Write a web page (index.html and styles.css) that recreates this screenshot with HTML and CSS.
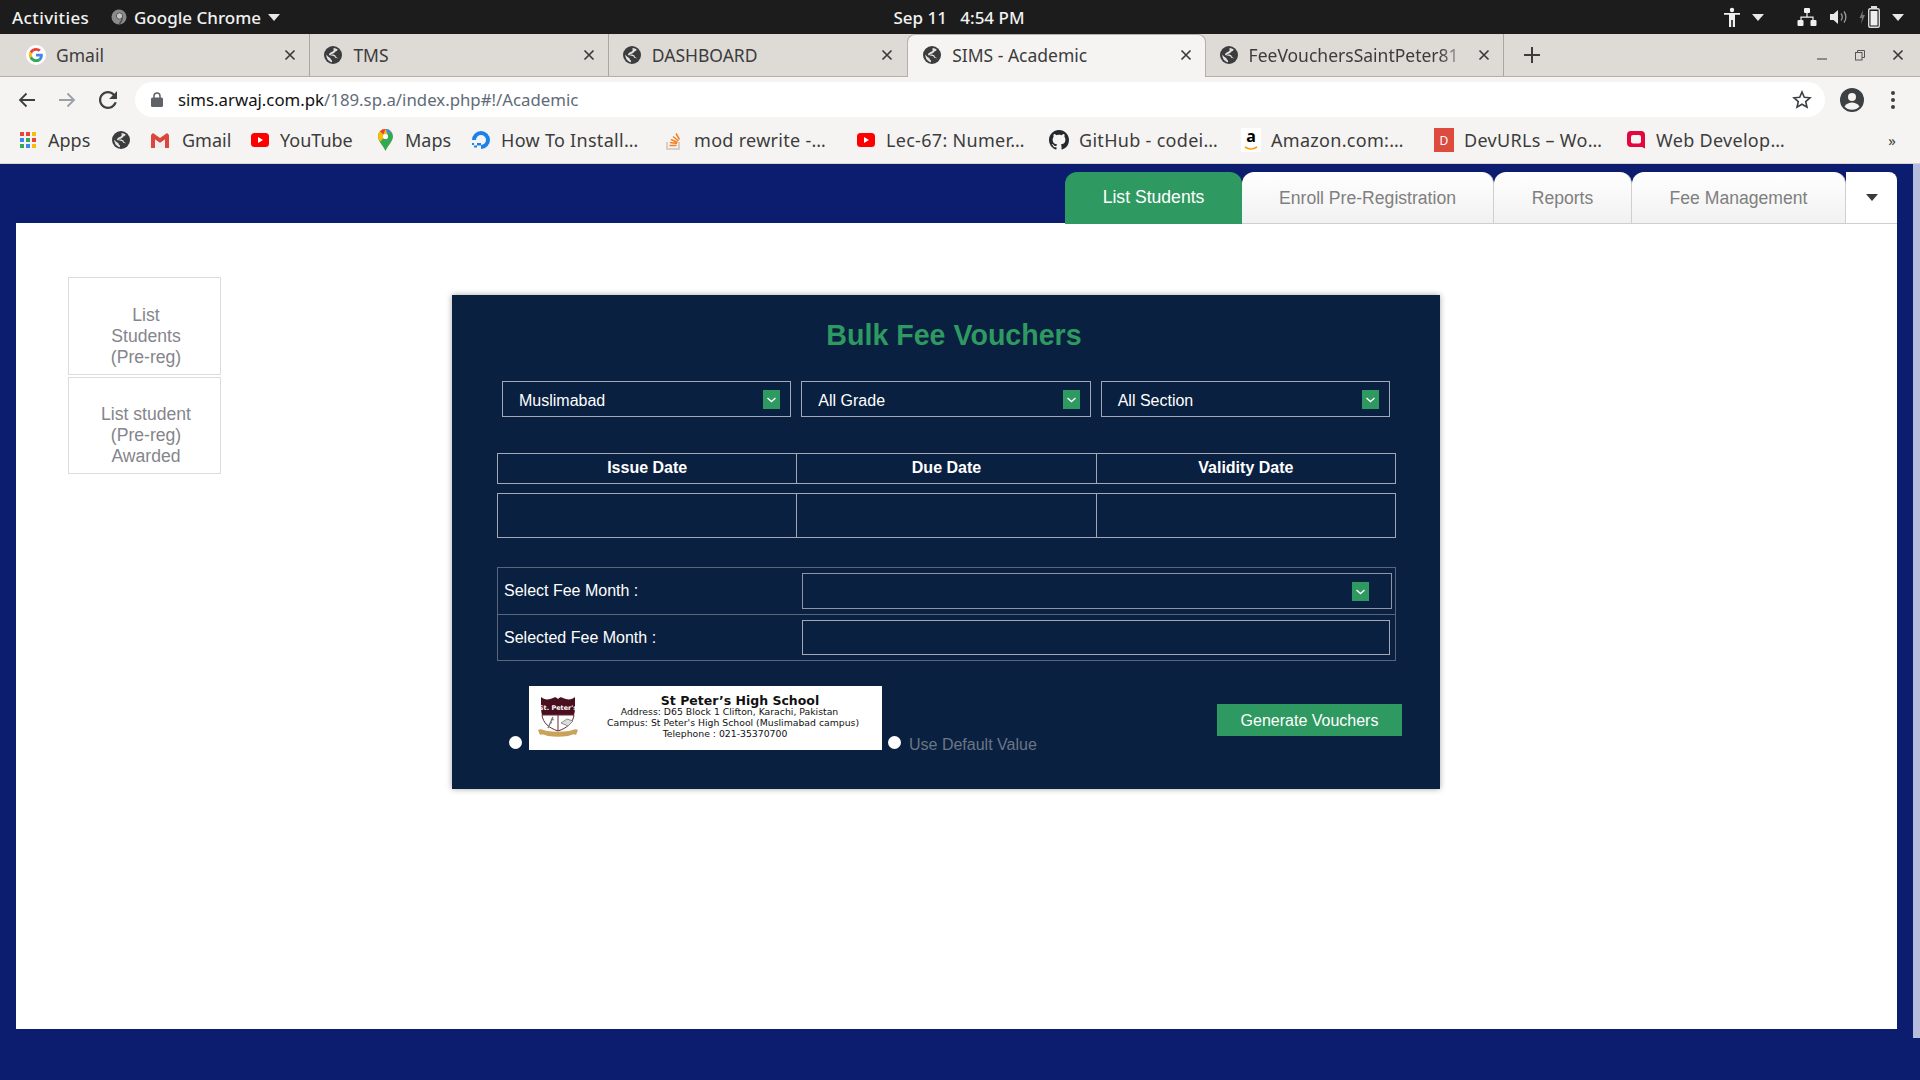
FILE: index.html
```html
<!DOCTYPE html>
<html lang="en">
<head>
  <meta charset="UTF-8" />
  <title>SIMS - Academic</title>
  <link rel="stylesheet" href="styles.css">
</head>
<body>

  <svg class="defs" width="0" height="0">
    <symbol id="globe" viewBox="0 0 20 20">
      <circle cx="10" cy="10" r="10" fill="#3a3c3e"/>
      <path d="M10.500 2.200c2 .1 3.400.7 4.700 1.700-.3 1.300-1.300 2-2.600 2.300-.5 1.200-1.600 1.700-2.800 2.400-1.100-.1-2.200.2-2.800 1 1.300 0 3-.2 4.500.3 1.200.4 1.800 1.200 1.700 2.300 1.100.2 1.800.8 2.100 1.900-.5-.8-1.500-1.200-2.900-1.100-.3-1.300-1.300-2-3-2.200-1.500-.2-3-.1-3.900-1 .3-2.300 2.400-3 4.300-3.700.9-.6 1.100-1.400.7-3.900z" fill="#e6e4e1"/>
      <path d="M2.600 9.500c1.300 2 2.800 3.300 4.600 4 .1 1.300.6 2 1.600 2.300l.1 2.300C5.300 17.400 2.300 14 2.600 9.500z" fill="#e6e4e1"/>
    </symbol>
    <symbol id="close" viewBox="0 0 12 12">
      <path d="M1.5 1.5l9 9M10.5 1.5l-9 9" stroke="#3c3c3c" stroke-width="1.7" fill="none"/>
    </symbol>
    <symbol id="youtube" viewBox="0 0 18 14">
      <rect width="18" height="14" rx="3.5" fill="#f00"/>
      <path d="M7 4l5 3-5 3z" fill="#fff"/>
    </symbol>
    <symbol id="chev" viewBox="0 0 17 19">
      <rect width="17" height="19" fill="#2e9960"/>
      <path d="M4.5 8l4 3.6 4-3.6" stroke="#fff" stroke-width="1.3" fill="none"/>
    </symbol>
  </svg>

  <!-- GNOME top bar -->
  <div class="topbar">
    <div class="topbar-left">
      <span class="activities">Activities</span>
      <svg class="chrome-dot" width="16" height="16" viewBox="0 0 16 16">
        <circle cx="8" cy="8" r="7.500" fill="#8a8a8a"/>
        <circle cx="8.500" cy="7" r="3.200" fill="#c4c4c4" stroke="#5a5a5a" stroke-width="1"/>
        <path d="M11.500 8.500C11.300 11 10 13 8.500 15" stroke="#4a4a4a" stroke-width="1.300" fill="none"/>
      </svg>
      <span class="appname">Google Chrome</span>
      <span class="tri"></span>
    </div>
    <div class="clock">Sep 11 &nbsp; 4:54 PM</div>
    <div class="topbar-right">
      <svg width="16" height="20" viewBox="0 0 16 20" fill="#f0f0f0">
        <circle cx="8" cy="3" r="2.2"/>
        <path d="M0 6h16v1.8h-5V20H8.8v-7H7.2v7H5V7.8H0z"/>
      </svg>
      <span class="tri tri-a"></span>
      <svg class="net" width="20" height="20" viewBox="0 0 20 20" fill="#f0f0f0">
        <rect x="7" y="1" width="6" height="5" rx="1"/>
        <rect x="0.500" y="13" width="6" height="6" rx="1"/>
        <rect x="13.500" y="13" width="6" height="6" rx="1"/>
        <path d="M9.400 6h1.200v3.500h6v3.500h-1.200v-2.300H4.600V13H3.400V9.500h6z"/>
      </svg>
      <svg class="vol" width="19" height="20" viewBox="0 0 19 20">
        <path d="M1 7h3.500L9 3v14l-4.500-4H1z" fill="#e8e8e8"/>
        <path d="M12 6.500c1.500 2 1.500 5 0 7M15 4.500c2.500 3.200 2.500 7.800 0 11" stroke="#9a9a9a" stroke-width="1.300" fill="none"/>
      </svg>
      <svg class="batt" width="22" height="24" viewBox="0 0 22 24">
        <path d="M4 5L0.500 13H3l-1 6 4-9H3.500z" fill="#777"/>
        <rect x="9.700" y="3.700" width="10.600" height="18.600" rx="1.500" fill="none" stroke="#ddd" stroke-width="1.400"/>
        <rect x="12" y="1" width="6" height="2" fill="#ddd"/>
        <rect x="11.500" y="6" width="7" height="14.500" fill="#eee"/>
      </svg>
      <span class="tri tri-b"></span>
    </div>
  </div>

  <!-- browser tabs -->
  <div class="tabstrip">
    <div class="tab">
      <svg class="fav" width="20" height="20" viewBox="0 0 48 48">
        <circle cx="24" cy="24" r="24" fill="#fff"/>
        <g transform="translate(7 7) scale(.71)">
          <path fill="#EA4335" d="M24 9.500c3.540 0 6.710 1.220 9.210 3.600l6.850-6.850C35.900 2.380 30.470 0 24 0 14.620 0 6.510 5.380 2.560 13.220l7.980 6.190C12.430 13.720 17.740 9.500 24 9.500z"/>
          <path fill="#4285F4" d="M46.980 24.550c0-1.570-.15-3.090-.38-4.550H24v9.020h12.940c-.58 2.960-2.260 5.480-4.780 7.180l7.730 6c4.510-4.180 7.090-10.360 7.090-17.650z"/>
          <path fill="#FBBC05" d="M10.530 28.590c-.48-1.450-.76-2.990-.76-4.590s.27-3.140.76-4.590l-7.980-6.190C.92 16.460 0 20.120 0 24c0 3.880.92 7.540 2.560 10.780l7.970-6.190z"/>
          <path fill="#34A853" d="M24 48c6.480 0 11.930-2.130 15.890-5.810l-7.730-6c-2.150 1.450-4.920 2.300-8.160 2.300-6.260 0-11.570-4.220-13.470-9.910l-7.980 6.190C6.510 42.620 14.620 48 24 48z"/>
        </g>
      </svg>
      <span class="tab-title tab-title-g">Gmail</span>
      <svg class="tab-x" width="12" height="12"><use href="#close"/></svg>
    </div>
    <div class="tab">
      <svg class="fav" width="18" height="18"><use href="#globe"/></svg>
      <span class="tab-title">TMS</span>
      <svg class="tab-x" width="12" height="12"><use href="#close"/></svg>
    </div>
    <div class="tab">
      <svg class="fav" width="18" height="18"><use href="#globe"/></svg>
      <span class="tab-title">DASHBOARD</span>
      <svg class="tab-x" width="12" height="12"><use href="#close"/></svg>
    </div>
    <div class="tab tab-active">
      <svg class="fav" width="18" height="18"><use href="#globe"/></svg>
      <span class="tab-title">SIMS - Academic</span>
      <svg class="tab-x" width="12" height="12"><use href="#close"/></svg>
    </div>
    <div class="tab">
      <svg class="fav" width="18" height="18"><use href="#globe"/></svg>
      <span class="tab-title tab-fade">FeeVouchersSaintPeter81</span>
      <svg class="tab-x" width="12" height="12"><use href="#close"/></svg>
    </div>
    <svg class="newtab" width="16" height="16" viewBox="0 0 16 16">
      <path d="M8 0v16M0 8h16" stroke="#3c3c3c" stroke-width="2"/>
    </svg>
    <div class="winctl">
      <svg width="12" height="12" viewBox="0 0 12 12"><path d="M1 10h10" stroke="#555" stroke-width="1.200"/></svg>
      <svg width="12" height="12" viewBox="0 0 12 12" fill="none" stroke="#555"><rect x="1.500" y="3.500" width="6.500" height="7.500"/><path d="M3.500 3.500V1.500H10.500V8.500H8"/></svg>
      <svg width="12" height="12"><use href="#close"/></svg>
    </div>
  </div>

  <!-- address bar -->
  <div class="toolbar">
    <svg class="tool tool-back" width="18" height="16" viewBox="0 0 18 16" fill="none" stroke="#3c4043" stroke-width="1.800"><path d="M17 8H2M8.500 1.500L2 8l6.500 6.500"/></svg>
    <svg class="tool tool-fwd" width="18" height="16" viewBox="0 0 18 16" fill="none" stroke="#9aa0a6" stroke-width="1.800"><path d="M1 8h15M9.500 1.500L16 8l-6.500 6.500"/></svg>
    <svg class="tool tool-reload" width="18" height="18" viewBox="4 4 16 16" fill="#3c4043"><path d="M17.650 6.350C16.200 4.900 14.210 4 12 4c-4.420 0-7.990 3.580-7.990 8s3.570 8 7.990 8c3.730 0 6.840-2.550 7.730-6h-2.080c-.82 2.330-3.040 4-5.650 4-3.310 0-6-2.690-6-6s2.690-6 6-6c1.660 0 3.140.69 4.220 1.780L13 11h7V4l-2.350 2.350z"/></svg>
    <div class="omnibox">
      <svg class="lock" width="12" height="15" viewBox="0 0 12 15"><path d="M3 6V4a3 3 0 0 1 6 0v2" fill="none" stroke="#5f6368" stroke-width="1.500"/><rect y="5.500" width="12" height="9.500" rx="1.500" fill="#5f6368"/></svg>
      <span class="url"><b>sims.arwaj.com.pk</b>/189.sp.a/index.php#!/Academic</span>
      <svg class="star" width="20" height="19" viewBox="0 0 20 19" fill="none" stroke="#3c4043" stroke-width="1.600"><path d="M10 2l2.300 5.300 5.700.5-4.300 3.800 1.300 5.600-5-3-5 3 1.300-5.600L2 7.800l5.700-.5z"/></svg>
    </div>
    <svg class="avatar" width="24" height="24" viewBox="0 0 24 24"><circle cx="12" cy="12" r="12" fill="#3c4043"/><circle cx="12" cy="9" r="4" fill="#f5f4f2"/><path d="M4.500 18.500c2-3 4.800-4 7.500-4s5.500 1 7.500 4c-2 2.200-4.600 3.300-7.500 3.300s-5.500-1.100-7.500-3.300z" fill="#f5f4f2"/></svg>
    <svg class="dots" width="4" height="18" viewBox="0 0 4 18" fill="#3c4043"><circle cx="2" cy="2" r="2"/><circle cx="2" cy="9" r="2"/><circle cx="2" cy="16" r="2"/></svg>
  </div>

  <!-- bookmarks -->
  <div class="bookmarks">
    <div class="bm">
      <span class="bm-icon"><svg width="16" height="16" viewBox="0 0 16 16">
        <rect width="4" height="4" fill="#ea4335"/><rect x="6" width="4" height="4" fill="#ea4335"/><rect x="12" width="4" height="4" fill="#fbbc05"/>
        <rect y="6" width="4" height="4" fill="#4285f4"/><rect x="6" y="6" width="4" height="4" fill="#34a853"/><rect x="12" y="6" width="4" height="4" fill="#ea4335"/>
        <rect y="12" width="4" height="4" fill="#34a853"/><rect x="6" y="12" width="4" height="4" fill="#4285f4"/><rect x="12" y="12" width="4" height="4" fill="#fbbc05"/>
      </svg></span>
      <span>Apps</span>
    </div>
    <div class="bm"><span class="bm-icon"><svg width="18" height="18"><use href="#globe"/></svg></span></div>
    <div class="bm bm-gmail">
      <span class="bm-icon"><svg width="18" height="15" viewBox="0 0 18 15">
        <path d="M0 2v13h4V6.500L9 10l5-3.500V15h4V2l-2-2-7 5-7-5z" fill="#d9483b"/>
        <path d="M4 15V6.500L9 10l5-3.500V15z" fill="#efefef"/>
      </svg></span>
      <span>Gmail</span>
    </div>
    <div class="bm"><span class="bm-icon"><svg width="18" height="14"><use href="#youtube"/></svg></span><span>YouTube</span></div>
    <div class="bm">
      <span class="bm-icon"><svg width="15" height="22" viewBox="0 0 15 22">
        <path d="M7.500 0C3.400 0 0 3.300 0 7.400c0 5 5 8.600 7.500 14.600C10 16 15 12.400 15 7.400 15 3.300 11.600 0 7.500 0z" fill="#34a853"/>
        <path d="M2 2.300A7.400 7.400 0 0 1 7.500 0c2 0 3.900.8 5.200 2.200L2.200 12.500C.8 10.700 0 9.200 0 7.400 0 5 1 3.500 2 2.300z" fill="#fbbc05"/>
        <path d="M2 2.300A7.400 7.400 0 0 1 7.500 0L5.300 5.400z" fill="#ea4335"/>
        <path d="M7.500 0c2 0 3.900.8 5.200 2.200L9.700 5.400z" fill="#4285f4"/>
        <circle cx="7.500" cy="7.500" r="2.600" fill="#fff"/>
      </svg></span>
      <span>Maps</span>
    </div>
    <div class="bm">
      <span class="bm-icon"><svg width="20" height="20" viewBox="0 0 20 20">
        <path d="M10 19v-4a5 5 0 1 0-5-5H1a9 9 0 1 1 9 9z" fill="#1a82ea"/>
        <rect x="6" y="13" width="4" height="2.500" fill="#1a82ea"/><rect x="3" y="15.500" width="3" height="2" fill="#1a82ea"/><rect x="1" y="13" width="2" height="2" fill="#1a82ea"/>
      </svg></span>
      <span class="bm-long">How To Install…</span>
    </div>
    <div class="bm">
      <span class="bm-icon"><svg width="16" height="20" viewBox="0 0 16 20">
        <path d="M1 12v7h12v-7" fill="none" stroke="#c8c4bd" stroke-width="1.500"/>
        <path d="M3.500 15.500h7M4 12.500l7 1M5 9.500l6.500 3M7 6.500l5.500 4.500M10 3.500l3.500 6" stroke="#f48024" stroke-width="1.500" fill="none"/>
      </svg></span>
      <span class="bm-long">mod rewrite -…</span>
    </div>
    <div class="bm"><span class="bm-icon"><svg width="18" height="14"><use href="#youtube"/></svg></span><span class="bm-long">Lec-67: Numer…</span></div>
    <div class="bm">
      <span class="bm-icon"><svg width="20" height="20" viewBox="0 0 16 16" fill="#24292e"><path d="M8 0C3.580 0 0 3.580 0 8c0 3.540 2.290 6.530 5.470 7.590.4.070.55-.17.55-.38 0-.19-.01-.82-.01-1.490-2.010.37-2.530-.49-2.690-.94-.09-.23-.48-.94-.82-1.130-.28-.15-.68-.52-.01-.53.63-.01 1.080.58 1.230.82.720 1.210 1.870.87 2.330.66.070-.52.280-.87.510-1.070-1.780-.2-3.640-.89-3.640-3.950 0-.87.310-1.590.820-2.150-.08-.2-.36-1.020.08-2.120 0 0 .67-.21 2.200.82.640-.18 1.320-.27 2-.27s1.360.09 2 .27c1.530-1.040 2.200-.82 2.200-.82.440 1.100.16 1.920.08 2.120.51.560.82 1.270.82 2.150 0 3.070-1.870 3.750-3.650 3.950.29.250.54.730.54 1.480 0 1.070-.01 1.930-.01 2.200 0 .21.150.46.550.38A8.010 8.010 0 0 0 16 8c0-4.420-3.580-8-8-8z"/></svg></span>
      <span class="bm-long">GitHub - codei…</span>
    </div>
    <div class="bm">
      <span class="bm-icon amazon">a<svg width="14" height="5" viewBox="0 0 14 5"><path d="M1 1c3.500 2.500 8 2.500 12 0" stroke="#f90" stroke-width="1.600" fill="none"/></svg></span>
      <span class="bm-long">Amazon.com:…</span>
    </div>
    <div class="bm"><span class="bm-icon devurls">D</span><span class="bm-long">DevURLs – Wo…</span></div>
    <div class="bm">
      <span class="bm-icon"><svg width="20" height="20" viewBox="0 0 20 20"><path d="M5 1h10a4 4 0 0 1 4 4v13.500L16 17H5a4 4 0 0 1-4-4V5a4 4 0 0 1 4-4z" fill="#e3063f"/><rect x="5" y="5" width="10" height="8.500" rx="2" fill="#f5f4f2"/></svg></span>
      <span class="bm-long">Web Develop…</span>
    </div>
    <div class="bm bm-more">»</div>
  </div>

  <!-- page -->
  <div class="page">
    <div class="nav-tabs">
      <div class="nav-tab nav-tab-active nav-tab-list">List Students</div>
      <div class="nav-tab nav-tab-enroll">Enroll Pre-Registration</div>
      <div class="nav-tab nav-tab-reports">Reports</div>
      <div class="nav-tab nav-tab-fee">Fee Management</div>
      <div class="nav-more"><span class="nav-tri"></span></div>
    </div>

    <div class="panel">
      <div class="sidemenu">
        <div class="sideitem">List<br>Students<br>(Pre-reg)</div>
        <div class="sideitem sideitem-b">List student<br>(Pre-reg)<br>Awarded</div>
      </div>

      <div class="voucher-card">
        <h1>Bulk Fee Vouchers</h1>

        <div class="filters">
          <div class="dropdown"><span>Muslimabad</span><svg width="17" height="19"><use href="#chev"/></svg></div>
          <div class="dropdown"><span>All Grade</span><svg width="17" height="19"><use href="#chev"/></svg></div>
          <div class="dropdown"><span>All Section</span><svg width="17" height="19"><use href="#chev"/></svg></div>
        </div>

        <table class="dates dates-head">
          <tr><th>Issue Date</th><th>Due Date</th><th>Validity Date</th></tr>
        </table>
        <table class="dates dates-body">
          <tr><td></td><td></td><td></td></tr>
        </table>

        <table class="months">
          <tr>
            <td class="month-label">Select Fee Month :</td>
            <td><div class="dropdown dropdown-month"><span></span><svg width="17" height="19"><use href="#chev"/></svg></div></td>
          </tr>
          <tr>
            <td class="month-label">Selected Fee Month :</td>
            <td><div class="month-input"></div></td>
          </tr>
        </table>

        <div class="footer-row">
          <input class="radio" type="radio" name="header">
          <div class="letterhead">
            <svg class="crest" width="40" height="40" viewBox="0 0 40 40">
              <path d="M3 0c3 3 8 3 12 1 2-1 3-1 5 1 2-2 3-2 5-1 4 2 9 2 12-1v8c0 3 0 7-1 10H4C3 15 3 11 3 8z" fill="#4a0f1e"/>
              <path d="M4 18h32c-1 8-7 13-16 16C11 31 5 26 4 18z" fill="#fff" stroke="#6a2a38" stroke-width="1"/>
              <path d="M20 18v16" stroke="#6a2a38" stroke-width="1" fill="none"/>
              <path d="M15 20l-5 11M13 22l3 1M12 25l2 1" stroke="#777" stroke-width="1.300" fill="none"/>
              <path d="M23 26l6-4 6 2-5 5z" fill="#dcdcdc" stroke="#777" stroke-width=".8"/>
              <path d="M0 33c3-2 5 0 9 1 7 1 15 1 22 0 4-1 6-3 9-1l-2 5c-2-1-5 0-8 1-7 1-13 1-20 0-3-1-6-2-8-1z" fill="#c9a35a"/>
              <text x="20" y="13" class="crest-name">St. Peter's</text>
            </svg>
            <div class="school">
              <div class="school-name">St Peter’s High School</div>
              <div class="school-address">Address: D65 Block 1 Clifton, Karachi, Pakistan</div>
              <div>Campus: St Peter's High School (Muslimabad campus)</div>
              <div class="school-phone">Telephone : 021-35370700</div>
            </div>
          </div>
          <input class="radio radio-b" type="radio" name="header">
          <span class="default-label">Use Default Value</span>
          <button class="generate">Generate Vouchers</button>
        </div>
      </div>
    </div>
    <div class="scroll-thumb"></div>
  </div>

</body>
</html>
```

FILE: styles.css
```css
* {
  box-sizing: border-box;
}
html, body {
  margin: 0;
  padding: 0;
  width: 1920px;
  height: 1080px;
  overflow: hidden;
}
body {
  font-family: "Liberation Sans", Arial, sans-serif;
  background: #0c1c6e;
}
.defs {
  display: block;
  height: 0;
}

/* top bar */
.topbar {
  height: 34px;
  background: #1c1c1c;
  color: #f2f2f2;
  display: grid;
  grid-template-columns: 1fr auto 1fr;
  align-items: center;
  font-family: "Noto Sans", sans-serif;
  font-size: 17px;
  font-weight: 500;
}
.topbar-left {
  display: flex;
  align-items: center;
  padding-left: 12px;
}
.activities {
  width: 99px;
  letter-spacing: 0.4px;
}
.chrome-dot {
  margin-top: -1px;
}
.appname {
  margin-left: 7px;
}
.tri {
  width: 0;
  height: 0;
  border-left: 6px solid transparent;
  border-right: 6px solid transparent;
  border-top: 7px solid #e8e8e8;
  margin-left: 7px;
}
.clock {
  margin-left: -2px;
}
.topbar-right {
  display: flex;
  align-items: center;
  justify-content: flex-end;
  padding-right: 16px;
}
.tri-a {
  margin-left: 12px;
}
.net {
  margin-left: 33px;
}
.vol {
  margin-left: 12px;
}
.batt {
  margin-left: 11px;
}
.tri-b {
  margin-left: 11px;
}

/* browser tabs */
.tabstrip {
  height: 43px;
  background: #dedbd7;
  border-bottom: 1px solid #b4b1ad;
  display: flex;
  align-items: flex-start;
  padding-left: 12px;
  font-family: "Noto Sans", sans-serif;
  font-size: 17.5px;
  color: #3c3c3c;
}
.tab {
  width: 298.4px;
  height: 42px;
  display: flex;
  align-items: center;
  padding: 0 13px 0 14px;
  border-right: 1px solid #a9a6a2;
}
.tab:nth-child(3) {
  border-right-color: transparent;
}
.tab-active {
  background: #f5f4f2;
  border: 1px solid #b4b1ad;
  border-bottom: none;
  border-radius: 8px 8px 0 0;
  height: 43px;
  padding-left: 15px;
  padding-bottom: 2px;
}
.fav {
  flex: none;
}
.tab-title {
  flex: 1;
  min-width: 0;
  margin-left: 11px;
  white-space: nowrap;
  overflow: hidden;
}
.tab-title-g {
  margin-left: 10px;
}
.tab-fade {
  -webkit-mask-image: linear-gradient(90deg, #000 86%, transparent 100%);
  mask-image: linear-gradient(90deg, #000 86%, transparent 100%);
}
.tab-x {
  flex: none;
  margin-left: 8px;
}
.newtab {
  margin: 13px 0 0 20px;
}
.winctl {
  margin-left: auto;
  height: 42px;
  display: flex;
  align-items: center;
  gap: 26px;
  padding-right: 16px;
}

/* address bar */
.toolbar {
  height: 40px;
  padding: 5px 0 0 18px;
  background: #f5f4f2;
  display: flex;
  align-items: center;
}
.tool-fwd {
  margin-left: 22px;
}
.tool-reload {
  margin-left: 23px;
}
.omnibox {
  margin-left: 18px;
  width: 1690px;
  height: 35px;
  background: #fff;
  border-radius: 18px;
  display: flex;
  align-items: center;
  padding: 0 13px 0 16px;
  font-family: "Noto Sans", sans-serif;
  font-size: 16.8px;
  color: #5f6b78;
}
.url {
  margin-left: 15px;
}
.url b {
  font-weight: 400;
  color: #111;
}
.star {
  margin-left: auto;
}
.avatar {
  margin-left: 15px;
}
.dots {
  margin-left: 27px;
}

/* bookmarks */
.bookmarks {
  height: 47px;
  background: #f5f4f2;
  border-bottom: 1px solid #d9d6d2;
  display: grid;
  grid-template-columns: 93px 39px 100px 125px 96px 193px 192px 193px 192px 193px 192px 254px 30px;
  align-items: center;
  padding-left: 18px;
  font-family: "Noto Sans", sans-serif;
  font-size: 18px;
  color: #3c3c3c;
}
.bm {
  display: flex;
  align-items: center;
  gap: 10px;
  white-space: nowrap;
}
.bm-gmail {
  gap: 12px;
}
.bm-long {
  letter-spacing: 0.3px;
}
.bm-icon {
  flex: none;
  width: 20px;
  display: flex;
  justify-content: center;
  align-items: center;
}
.bm-more {
  font-size: 15px;
  justify-content: center;
  padding-right: 6px;
}
.amazon {
  display: block;
  height: 24px;
  background: #fff;
  color: #000;
  font-weight: 700;
  font-size: 16px;
  line-height: 17px;
  text-align: center;
  position: relative;
}
.amazon svg {
  position: absolute;
  left: 3px;
  bottom: 1px;
}
.devurls {
  height: 24px;
  background: #dd4b3e;
  color: #fff;
  font-size: 12px;
}

/* page */
.page {
  position: relative;
  height: 916px;
}
.scroll-thumb {
  position: absolute;
  right: 0;
  top: 0;
  width: 7px;
  height: 874px;
  background: #b6bcdc;
}
.nav-tabs {
  display: flex;
  justify-content: flex-end;
  height: 60px;
  padding: 8px 23px 0 0;
  font-size: 17.6px;
}
.nav-tab {
  height: 52px;
  padding-top: 1px;
  display: flex;
  align-items: center;
  justify-content: center;
  color: #7f7f7f;
  background: linear-gradient(180deg, #ffffff 0%, #f1f1f1 100%);
  border-radius: 12px 12px 0 0;
  border-right: 1px solid #cfcfcf;
  border-bottom: 1px solid #cfcfcf;
}
.nav-tab-active {
  background: #2e9960;
  color: #fff;
  border: none;
  padding: 0 0 1px;
}
.nav-tab-list {
  width: 177px;
}
.nav-tab-enroll {
  width: 252px;
}
.nav-tab-reports {
  width: 138px;
}
.nav-tab-fee {
  width: 214px;
}
.nav-more {
  width: 51px;
  height: 52px;
  background: #fff;
  border-radius: 0 8px 0 0;
  border-bottom: 1px solid #cfcfcf;
  display: flex;
  align-items: center;
  justify-content: center;
}
.nav-tri {
  width: 0;
  height: 0;
  border-left: 6px solid transparent;
  border-right: 6px solid transparent;
  border-top: 7px solid #3a3a3a;
}
.panel {
  margin: -1px 23px 0 16px;
  height: 806px;
  background: #fff;
  display: flex;
  align-items: flex-start;
  padding: 54px 0 0 52px;
}

/* left menu */
.sidemenu {
  width: 153px;
  font-size: 17.6px;
  line-height: 21px;
  color: #85858b;
  text-align: center;
}
.sideitem {
  height: 98px;
  border: 1px solid #dcdcdc;
  padding: 27px 0 0 3px;
  margin-bottom: 2px;
}
.sideitem-b {
  height: 97px;
  padding-top: 26px;
}

/* voucher card */
.voucher-card {
  width: 988px;
  height: 494px;
  margin: 18px 0 0 231px;
  padding: 20px 29px 0 45px;
  background: #0a2040;
  color: #fff;
  box-shadow: 0 0 6px rgba(0,0,0,0.35);
  font-size: 16px;
}
.voucher-card h1 {
  margin: 0;
  height: 40px;
  line-height: 40px;
  font-size: 28.6px;
  text-align: center;
  color: #2e9960;
}
.filters {
  width: 888px;
  margin: 26px 0 0 5px;
  display: grid;
  grid-template-columns: repeat(3, 1fr);
  gap: 10px;
}
.dropdown {
  height: 36px;
  border: 1px solid #a2a9b4;
  display: flex;
  align-items: center;
  justify-content: space-between;
  padding: 0 10px 0 16px;
}
.dropdown > span {
  padding-top: 3px;
}
table {
  border-collapse: collapse;
  table-layout: fixed;
  width: 899px;
}
.dates th,
.dates td {
  border: 1px solid #a2a9b4;
  padding: 0;
  text-align: center;
}
.dates-head {
  height: 31px;
  margin-top: 36px;
}
.dates-head th {
  padding-bottom: 1px;
}
.dates-body {
  height: 45px;
  margin-top: 9px;
}
.months {
  height: 94px;
  margin-top: 29px;
}
.months td {
  border: 1px solid #59657a;
  padding: 0;
}
.months td:first-child {
  border-right: none;
}
.months td:last-child {
  border-left: none;
  padding: 0 3px 0 0;
}
.month-label {
  width: 304px;
  padding-left: 6px !important;
}
.dropdown-month {
  padding-right: 22px;
  border-color: #8f96a2;
}
.month-input {
  height: 35px;
  width: 588px;
  border: 1px solid #a2a9b4;
}
.footer-row {
  width: 905px;
  height: 64px;
  margin-top: 25px;
  display: flex;
  align-items: flex-end;
  padding-left: 12px;
}
.radio {
  appearance: none;
  -webkit-appearance: none;
  flex: none;
  width: 13px;
  height: 13px;
  margin: 0 0 1px;
  border-radius: 50%;
  background: #fff;
}
.letterhead {
  width: 353px;
  height: 64px;
  margin-left: 7px;
  background: #fff;
  color: #111;
  display: flex;
  align-items: flex-start;
  font-family: "DejaVu Sans", sans-serif;
  font-size: 9.3px;
  line-height: 11px;
}
.crest {
  flex: none;
  margin: 11px 0 0 9px;
}
.crest-name {
  font-family: "DejaVu Sans", sans-serif;
  font-size: 6.500px;
  font-weight: 700;
  fill: #fff;
  text-anchor: middle;
}
.school {
  width: 264px;
  margin: 9px 0 0 23px;
  text-align: center;
}
.school-name {
  font-size: 12.5px;
  font-weight: 700;
  padding-left: 14px;
}
.school-address {
  padding-right: 7px;
}
.school-phone {
  padding-right: 16px;
}
.radio-b {
  margin-left: 6px;
}
.default-label {
  margin: 0 0 -4px 8px;
  color: #6b7685;
  line-height: 18px;
}
.generate {
  width: 185px;
  height: 32px;
  margin: 0 0 14px auto;
  padding: 1px 0 0;
  background: #2e9960;
  color: #fff;
  border: none;
  font-family: inherit;
  font-size: 16px;
}
```
